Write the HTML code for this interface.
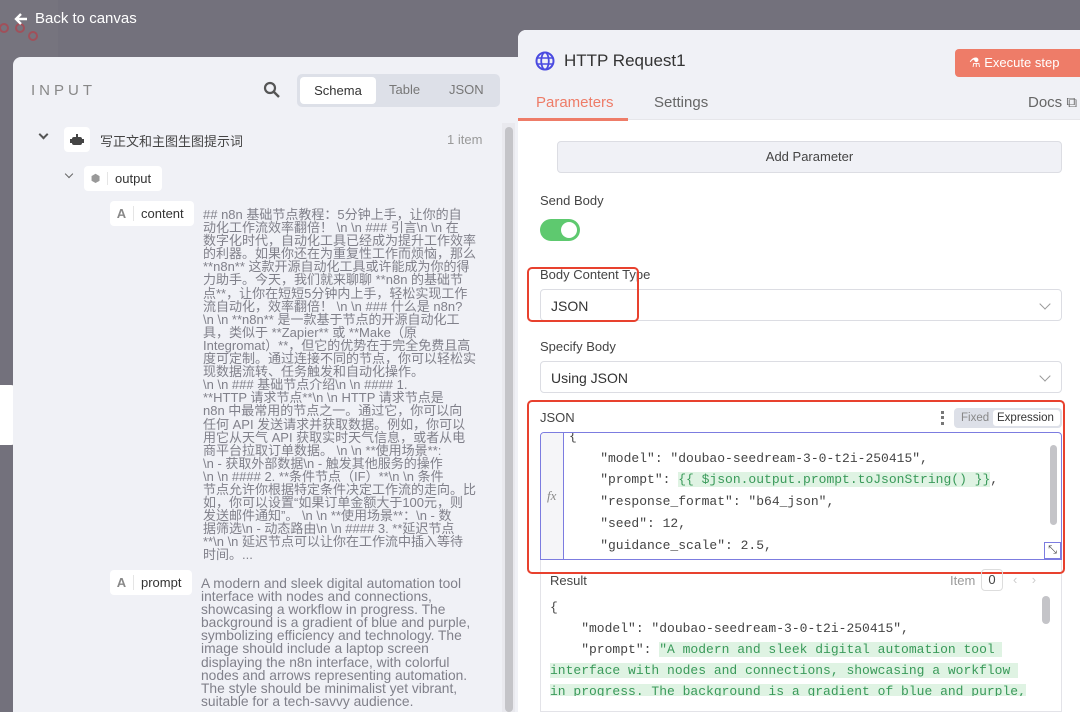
<!DOCTYPE html>
<html><head><meta charset="utf-8"><style>
*{box-sizing:border-box;margin:0;padding:0}
body{width:1080px;height:712px;overflow:hidden;background:#73717c;font-family:"Liberation Sans","Noto Sans CJK SC",sans-serif;position:relative;color:#444}
.abs{position:absolute}
.mono{font-family:"Liberation Mono","DejaVu Sans Mono",monospace}
.lp{left:13px;top:57px;width:505px;height:655px;background:#f0f1f6;border-radius:8px 0 0 0}
.pill{background:#fff;border-radius:4px;height:25px;font-size:13px;color:#333;display:flex;align-items:center}
.ct{font-size:13px;line-height:13.1px;color:#80808a;white-space:nowrap}
.lbl{font-size:13px;color:#444}
.sel{left:540px;width:522px;height:32px;background:#fff;border:1px solid #dcdde3;border-radius:4px;font-size:14px;color:#333;padding:8px 10px}
.chev{position:absolute;right:12px;top:10px;width:8px;height:8px;border-right:1px solid #999;border-bottom:1px solid #999;transform:rotate(45deg)}
.code{font-size:13px;color:#444;white-space:pre}
.g{background:#dff3e3;color:#3a9a5a}
</style></head><body>
<div class="abs" style="left:0;top:0;width:58px;height:60px;background:#76747e"></div>
<svg class="abs" style="left:0;top:14px" width="40" height="30"><circle cx="4" cy="14" r="4" fill="none" stroke="#a0505a" stroke-width="2"/><circle cx="20" cy="14" r="4" fill="none" stroke="#a0505a" stroke-width="2"/><circle cx="33" cy="22" r="4" fill="none" stroke="#a0505a" stroke-width="2"/></svg>
<svg class="abs" style="left:13px;top:11px" width="16" height="16"><path d="M14 8H3M8 3L3 8l5 5" fill="none" stroke="#fff" stroke-width="2.4"/></svg>
<div class="abs" style="left:35px;top:10px;font-size:15px;color:#fff">Back to canvas</div>
<div class="abs" style="left:0;top:385px;width:17px;height:60px;background:#fff;border-radius:0 6px 6px 0"></div>

<div class="abs lp"></div>
<div class="abs" style="left:31px;top:82px;font-size:15px;letter-spacing:4px;color:#888">INPUT</div>
<svg class="abs" style="left:263px;top:81px" width="18" height="18"><circle cx="7" cy="7" r="5" fill="none" stroke="#555" stroke-width="2.2"/><line x1="11" y1="11" x2="16" y2="16" stroke="#555" stroke-width="2.4"/></svg>
<div class="abs" style="left:297px;top:74px;width:203px;height:33px;background:#dde0e8;border-radius:5px"></div>
<div class="abs" style="left:300px;top:77px;width:76px;height:27px;background:#fff;border-radius:4px;font-size:13px;color:#333;text-align:center;line-height:27px">Schema</div>
<div class="abs" style="left:389px;top:82px;font-size:13px;color:#777">Table</div>
<div class="abs" style="left:449px;top:82px;font-size:13px;color:#777">JSON</div>

<div class="abs" style="left:40px;top:131px;width:7px;height:7px;border-right:2px solid #555;border-bottom:2px solid #555;transform:rotate(45deg)"></div>
<div class="abs pill" style="left:64px;top:127px;width:26px;justify-content:center">
<svg width="14" height="12"><rect x="2" y="3" width="10" height="8" rx="2" fill="#444"/><rect x="6" y="0" width="2" height="3" fill="#444"/><rect x="0" y="5" width="2" height="4" fill="#444"/><rect x="12" y="5" width="2" height="4" fill="#444"/></svg></div>
<div class="abs" style="left:100px;top:131px;font-size:13px;color:#444">写正文和主图生图提示词</div>
<div class="abs" style="left:447px;top:132px;font-size:13px;color:#999">1 item</div>

<div class="abs" style="left:66px;top:171px;width:6px;height:6px;border-right:1.5px solid #666;border-bottom:1.5px solid #666;transform:rotate(45deg)"></div>
<div class="abs pill" style="left:84px;top:166px;width:78px"><span style="width:24px;text-align:center;color:#999;font-size:11px;border-right:1px solid #e5e5e5">⬢</span><span style="padding-left:7px">output</span></div>
<div class="abs pill" style="left:110px;top:201px;width:84px"><span style="width:24px;text-align:center;color:#888;font-weight:bold;border-right:1px solid #e5e5e5">A</span><span style="padding-left:7px">content</span></div>
<div class="abs ct" style="left:203px;top:208px">## n8n 基础节点教程：5分钟上手，让你的自<br>动化工作流效率翻倍！ \n \n ### 引言\n \n 在<br>数字化时代，自动化工具已经成为提升工作效率<br>的利器。如果你还在为重复性工作而烦恼，那么<br>**n8n** 这款开源自动化工具或许能成为你的得<br>力助手。今天，我们就来聊聊 **n8n 的基础节<br>点**，让你在短短5分钟内上手，轻松实现工作<br>流自动化，效率翻倍！ \n \n ### 什么是 n8n?<br>\n \n **n8n** 是一款基于节点的开源自动化工<br>具，类似于 **Zapier** 或 **Make（原<br>Integromat）**，但它的优势在于完全免费且高<br>度可定制。通过连接不同的节点，你可以轻松实<br>现数据流转、任务触发和自动化操作。<br>\n \n ### 基础节点介绍\n \n #### 1.<br>**HTTP 请求节点**\n \n HTTP 请求节点是<br>n8n 中最常用的节点之一。通过它，你可以向<br>任何 API 发送请求并获取数据。例如，你可以<br>用它从天气 API 获取实时天气信息，或者从电<br>商平台拉取订单数据。 \n \n **使用场景**:<br>\n - 获取外部数据\n - 触发其他服务的操作<br>\n \n #### 2. **条件节点（IF）**\n \n 条件<br>节点允许你根据特定条件决定工作流的走向。比<br>如，你可以设置“如果订单金额大于100元，则<br>发送邮件通知”。 \n \n **使用场景**：\n - 数<br>据筛选\n - 动态路由\n \n #### 3. **延迟节点<br>**\n \n 延迟节点可以让你在工作流中插入等待<br>时间。...</div>
<div class="abs pill" style="left:110px;top:570px;width:82px"><span style="width:24px;text-align:center;color:#888;font-weight:bold;border-right:1px solid #e5e5e5">A</span><span style="padding-left:7px">prompt</span></div>
<div class="abs ct" style="left:201px;top:577px;font-size:13.8px">A modern and sleek digital automation tool<br>interface with nodes and connections,<br>showcasing a workflow in progress. The<br>background is a gradient of blue and purple,<br>symbolizing efficiency and technology. The<br>image should include a laptop screen<br>displaying the n8n interface, with colorful<br>nodes and arrows representing automation.<br>The style should be minimalist yet vibrant,<br>suitable for a tech-savvy audience.</div>
<div class="abs" style="left:502px;top:123px;width:13px;height:589px;background:#e9e9ee"></div>
<div class="abs" style="left:505px;top:127px;width:8px;height:585px;background:#c4c4c8;border-radius:4px"></div>

<div class="abs" style="left:518px;top:30px;width:562px;height:682px;background:#fff;border-radius:8px 0 0 0"></div>
<div class="abs" style="left:518px;top:30px;width:562px;height:90px;background:#f0f1f6;border-radius:8px 0 0 0;border-bottom:1px solid #e6e6ea"></div>
<svg class="abs" style="left:535px;top:51px" width="20" height="20"><circle cx="10" cy="10" r="8.5" fill="none" stroke="#4a4ae0" stroke-width="2"/><ellipse cx="10" cy="10" rx="3.8" ry="8.5" fill="none" stroke="#4a4ae0" stroke-width="1.8"/><line x1="1.5" y1="7" x2="18.5" y2="7" stroke="#4a4ae0" stroke-width="1.6"/><line x1="1.5" y1="13" x2="18.5" y2="13" stroke="#4a4ae0" stroke-width="1.6"/></svg>
<div class="abs" style="left:564px;top:51px;font-size:17px;color:#333">HTTP Request1</div>
<div class="abs" style="left:955px;top:49px;width:130px;height:28px;background:#ee7c68;border-radius:4px;color:#fff;font-size:13px;line-height:28px;padding-left:14px">⚗ Execute step</div>
<div class="abs" style="left:536px;top:94px;font-size:15px;color:#ee7c68">Parameters</div>
<div class="abs" style="left:518px;top:118px;width:110px;height:3px;background:#ee7c68"></div>
<div class="abs" style="left:654px;top:94px;font-size:15px;color:#666">Settings</div>
<div class="abs" style="left:1028px;top:94px;font-size:15px;color:#666">Docs ⧉</div>

<div class="abs" style="left:557px;top:141px;width:505px;height:32px;background:#f0f1f6;border:1px solid #dcdde3;border-radius:4px;font-size:13px;color:#444;text-align:center;line-height:30px">Add Parameter</div>
<div class="abs lbl" style="left:540px;top:193px">Send Body</div>
<div class="abs" style="left:540px;top:219px;width:40px;height:22px;background:#5ec96f;border-radius:11px"><div style="position:absolute;right:3px;top:3px;width:16px;height:16px;background:#fff;border-radius:50%"></div></div>
<div class="abs lbl" style="left:540px;top:267px">Body Content Type</div>
<div class="abs sel" style="top:289px">JSON<div class="chev"></div></div>
<div class="abs" style="left:527px;top:267px;width:112px;height:55px;border:2.5px solid #e8412e;border-radius:5px"></div>
<div class="abs lbl" style="left:540px;top:339px">Specify Body</div>
<div class="abs sel" style="top:361px">Using JSON<div class="chev"></div></div>

<div class="abs lbl" style="left:540px;top:410px">JSON</div>
<div class="abs" style="left:941px;top:411px;width:3px;height:14px;border-left:3px dotted #777"></div>
<div class="abs" style="left:954px;top:408px;width:108px;height:20px;background:#dde0e8;border-radius:4px;font-size:11.5px"><span style="position:absolute;left:7px;top:4px;color:#888">Fixed</span><span style="position:absolute;left:39px;top:2px;width:67px;height:16px;background:#fff;border-radius:3px;color:#333;padding:2px 0 0 4px">Expression</span></div>
<div class="abs" style="left:540px;top:432px;width:522px;height:128px;border:1px solid #7c7ce0;border-radius:4px 4px 0 0;overflow:hidden;background:#fff">
<div style="position:absolute;left:0;top:0;width:23px;height:128px;background:#f5f5f8;border-right:1px solid #7c7ce0"></div>
<div style="position:absolute;left:6px;top:55px;font-style:italic;font-family:'Liberation Serif',serif;color:#888;font-size:13px">fx</div>
<div class="code mono" style="position:absolute;left:28px;top:-7px;line-height:21.7px">{
    "model": "doubao-seedream-3-0-t2i-250415",
    "prompt": <span class="g">{{ $json.output.prompt.toJsonString() }}</span>,
    "response_format": "b64_json",
    "seed": 12,
    "guidance_scale": 2.5,</div>
<div style="position:absolute;right:4px;top:12px;width:7px;height:80px;background:#c4c4c8;border-radius:4px"></div>
<div style="position:absolute;right:0;bottom:0;width:17px;height:17px;border:1px solid #7c7ce0;background:#fff;font-size:11px;text-align:center;line-height:15px">⤡</div>
</div>
<div class="abs" style="left:540px;top:560px;width:522px;height:152px;border:1px solid #e3e3e8;border-top:none"></div>
<div class="abs" style="left:527px;top:400px;width:538px;height:174px;border:2.5px solid #e8412e;border-radius:5px"></div>
<div class="abs" style="left:550px;top:573px;font-size:13px;color:#444">Result</div>
<div class="abs" style="left:950px;top:573px;font-size:13px;color:#999">Item</div>
<div class="abs" style="left:981px;top:569px;width:22px;height:22px;border:1px solid #ddd;border-radius:4px;font-size:13px;text-align:center;line-height:20px">0</div>
<div class="abs" style="left:1013px;top:572px;font-size:13px;color:#ccc">‹&nbsp;&nbsp;&nbsp;&nbsp;›</div>
<div class="abs code mono" style="left:550px;top:597px;line-height:21px;height:99px;overflow:hidden">{
    "model": "doubao-seedream-3-0-t2i-250415",
    "prompt": <span class="g">"A modern and sleek digital automation tool </span>
<span class="g">interface with nodes and connections, showcasing a workflow </span>
<span class="g">in progress. The background is a gradient of blue and purple,</span></div>
<div class="abs" style="left:1042px;top:596px;width:8px;height:28px;background:#c4c4c8;border-radius:4px"></div>
</body></html>
